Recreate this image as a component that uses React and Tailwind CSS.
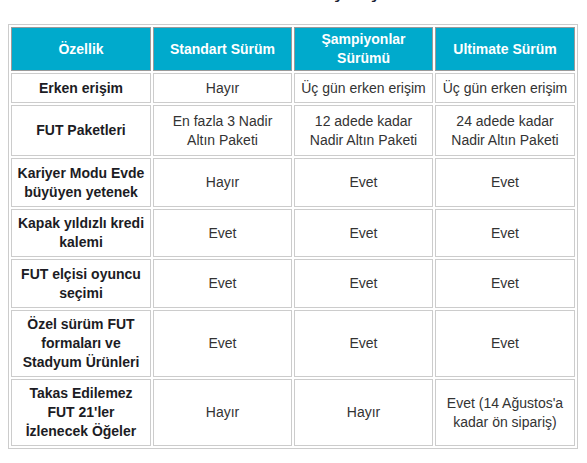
import React from 'react';

const headers = ['Özellik', 'Standart Sürüm', 'Şampiyonlar Sürümü', 'Ultimate Sürüm'];

const rows = [
    { h: 'h-[30px]', cells: ['Erken erişim', 'Hayır', 'Üç gün erken erişim', 'Üç gün erken erişim'] },
    { h: 'h-[51px]', cells: ['FUT Paketleri', 'En fazla 3 Nadir Altın Paketi', '12 adede kadar Nadir Altın Paketi', '24 adede kadar Nadir Altın Paketi'] },
    { h: 'h-[49px]', cells: ['Kariyer Modu Evde büyüyen yetenek', 'Hayır', 'Evet', 'Evet'] },
    { h: 'h-[48px]', cells: ['Kapak yıldızlı kredi kalemi', 'Evet', 'Evet', 'Evet'] },
    { h: 'h-[49px]', cells: ['FUT elçisi oyuncu seçimi', 'Evet', 'Evet', 'Evet'] },
    { h: 'h-[65px]', cells: ['Özel sürüm FUT formaları ve Stadyum Ürünleri', 'Evet', 'Evet', 'Evet'] },
    { h: 'h-[67px]', cells: ["Takas Edilemez FUT 21'ler İzlenecek Öğeler", 'Hayır', 'Hayır', "Evet (14 Ağustos'a kadar ön sipariş)"] },
];

const App = () => {
    return (
        <div className="w-[587px] h-[463px] bg-white overflow-hidden font-['Liberation_Sans',Arial,sans-serif]">
            {/* heading scrolled mostly out of view */}
            <div className="h-[24px] overflow-hidden">
                <h3 className="mt-[-23px] text-center text-[22px] leading-[26px] font-bold text-[#1a2233]">
                    FIFA 21 Sürüm Karşılaştırması
                </h3>
            </div>

            <table className="ml-[8px] w-[570px] table-fixed border-separate border-spacing-[2px] border border-[#cccccc] text-[14px] leading-[19px]">
                <colgroup>
                    <col className="w-[140px]" />
                    <col className="w-[139px]" />
                    <col className="w-[139px]" />
                    <col className="w-[140px]" />
                </colgroup>
                <thead>
                    <tr className="h-[44px]">
                        {headers.map((title) => (
                            <th
                                key={title}
                                className="border border-[#9a9a9a] bg-[#00aacc] px-[4px] py-[2px] text-center align-middle font-bold text-white"
                            >
                                {title}
                            </th>
                        ))}
                    </tr>
                </thead>
                <tbody>
                    {rows.map((row) => (
                        <tr key={row.cells[0]} className={row.h}>
                            {row.cells.map((cell, i) => (
                                <td
                                    key={i}
                                    className={`border border-[#cccccc] px-[4px] py-[4px] text-center align-middle ${i === 0 ? 'font-bold text-[#1c1c24]' : 'text-[#333333]'}`}
                                >
                                    {cell}
                                </td>
                            ))}
                        </tr>
                    ))}
                </tbody>
            </table>
        </div>
    );
};

export default App;
